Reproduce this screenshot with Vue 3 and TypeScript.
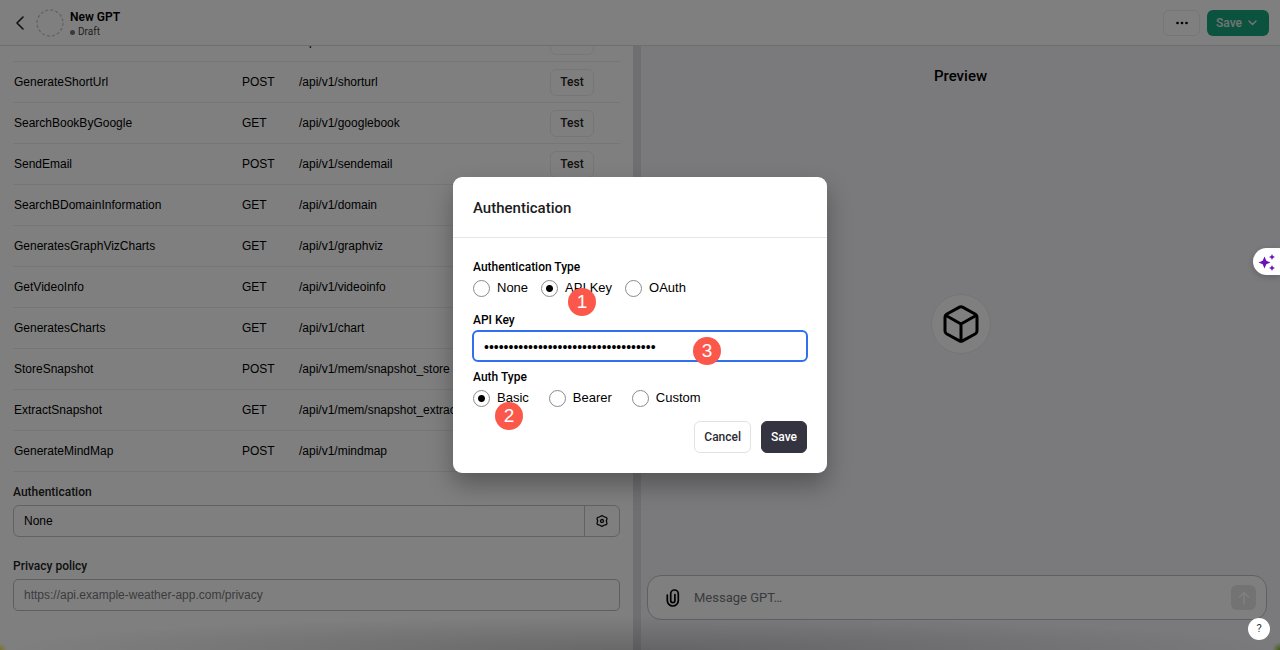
<script setup lang="ts">
import { ref } from 'vue'

interface Action {
  name: string
  method: string
  path: string
}

const actions: Action[] = [
  { name: '', method: '', path: '/api/v1/' },
  { name: 'GenerateShortUrl', method: 'POST', path: '/api/v1/shorturl' },
  { name: 'SearchBookByGoogle', method: 'GET', path: '/api/v1/googlebook' },
  { name: 'SendEmail', method: 'POST', path: '/api/v1/sendemail' },
  { name: 'SearchBDomainInformation', method: 'GET', path: '/api/v1/domain' },
  { name: 'GeneratesGraphVizCharts', method: 'GET', path: '/api/v1/graphviz' },
  { name: 'GetVideoInfo', method: 'GET', path: '/api/v1/videoinfo' },
  { name: 'GeneratesCharts', method: 'GET', path: '/api/v1/chart' },
  { name: 'StoreSnapshot', method: 'POST', path: '/api/v1/mem/snapshot_store' },
  { name: 'ExtractSnapshot', method: 'GET', path: '/api/v1/mem/snapshot_extract' },
  { name: 'GenerateMindMap', method: 'POST', path: '/api/v1/mindmap' },
]

const authKind = ref('API Key')
const authScheme = ref('Basic')
const apiKey = ref('0123456789abcdef0123456789abcdef012')
const message = ref('')
const privacy = ref('')
</script>

<template>
  <div class="page">
    <header class="topbar">
      <button class="plain" aria-label="Back">
        <svg width="10" height="16" viewBox="0 0 10 16"><path d="M8 2 2 8l6 6" fill="none" stroke="#222" stroke-width="1.6" stroke-linecap="round" stroke-linejoin="round" /></svg>
      </button>
      <svg class="avatar" width="28" height="28" viewBox="0 0 28 28"><circle cx="14" cy="14" r="13" fill="none" stroke="#c8c8c8" stroke-width="1.4" stroke-dasharray="3 2.1" /></svg>
      <div class="names">
        <div class="title">New GPT</div>
        <div class="draft"><span class="dot"></span>Draft</div>
      </div>
      <button class="more" aria-label="More">
        <svg width="14" height="4" viewBox="0 0 14 4"><circle cx="2.5" cy="2" r="1.3" /><circle cx="7" cy="2" r="1.3" /><circle cx="11.5" cy="2" r="1.3" /></svg>
      </button>
      <button class="publish">
        Save
        <svg width="9" height="6" viewBox="0 0 9 6"><path d="M1 1l3.5 3.5L8 1" fill="none" stroke="#e8e8e8" stroke-width="1.5" stroke-linecap="round" stroke-linejoin="round" /></svg>
      </button>
    </header>

    <main class="columns">
      <section class="editor">
        <table>
          <tbody>
            <tr v-for="a in actions" :key="a.path">
              <td class="c-name">{{ a.name }}</td>
              <td class="c-method">{{ a.method }}</td>
              <td>{{ a.path }}</td>
              <td class="c-test"><button class="test">Test</button></td>
            </tr>
          </tbody>
        </table>
        <label class="label" for="auth">Authentication</label>
        <div class="authbox">
          <input id="auth" value="None" readonly />
          <button class="gear" aria-label="Authentication settings">
            <svg width="12" height="12" viewBox="0 0 24 24" fill="none" stroke="#111" stroke-width="2.6" stroke-linejoin="round"><path d="M9.2 3Q12-.4 14.8 3L18.600 4.400Q23 5.200 21.600 9L20.600 12l1 3Q23 18.800 18.600 19.600L14.800 21Q12 24.400 9.200 21L5.400 19.600Q1 18.800 2.400 15L3.400 12 2.400 9Q1 5.200 5.400 4.400Z" /><circle cx="12" cy="12" r="3" /></svg>
          </button>
        </div>
        <label class="label privacy-label" for="privacy">Privacy policy</label>
        <input id="privacy" v-model="privacy" class="privacy" placeholder="https://api.example-weather-app.com/privacy" />
      </section>

      <div class="gutter"></div>

      <section class="preview">
        <h2>Preview</h2>
        <div class="stage">
          <div class="cube">
            <svg width="36" height="38" viewBox="0 0 36 38" fill="none" stroke="#000" stroke-width="3" stroke-linejoin="round" stroke-linecap="round"><path d="M16.500 2.100Q18 1.300 19.500 2.100L32.500 9.300Q34 10.200 34 12V26Q34 27.800 32.500 28.700L19.500 35.900Q18 36.700 16.500 35.900L3.500 28.700Q2 27.800 2 26V12Q2 10.200 3.500 9.300ZM3 10.500 18 19l15-8.500M18 19v17" /></svg>
          </div>
        </div>
        <div class="composer">
          <svg width="14" height="18" viewBox="0 0 14 18" fill="none" stroke="#000" stroke-width="1.7" stroke-linecap="round"><path d="M1.300 6v5.500a5.500 5.500 0 0 0 11 0V4.800a3.800 3.800 0 0 0-7.600 0v6.700a2.100 2.100 0 0 0 4.200 0V5.500" /></svg>
          <input v-model="message" placeholder="Message GPT…" aria-label="Message GPT" />
          <button class="send" aria-label="Send">
            <svg width="12" height="14" viewBox="0 0 12 14" fill="none" stroke="#fff" stroke-width="1.600" stroke-linecap="round" stroke-linejoin="round"><path d="M6 13V2M1.500 6 6 1.500 10.500 6" /></svg>
          </button>
        </div>
      </section>
    </main>

    <div class="backdrop">
      <div class="dialog" role="dialog" aria-labelledby="dlg-title">
        <h1 id="dlg-title">Authentication</h1>
        <form class="form" @submit.prevent>
          <div class="field-label">Authentication Type</div>
          <div class="radios">
            <label><input v-model="authKind" type="radio" name="kind" value="None" />None</label>
            <label><input v-model="authKind" type="radio" name="kind" value="API Key" />API Key<span class="badge b1">1</span></label>
            <label><input v-model="authKind" type="radio" name="kind" value="OAuth" />OAuth</label>
          </div>
          <label class="field-label key-label" for="key">API Key</label>
          <div class="keybox">
            <input id="key" v-model="apiKey" type="password" />
            <span class="badge b3">3</span>
          </div>
          <div class="field-label scheme-label">Auth Type</div>
          <div class="radios wide">
            <label><input v-model="authScheme" type="radio" name="scheme" value="Basic" />Basic<span class="badge b2">2</span></label>
            <label><input v-model="authScheme" type="radio" name="scheme" value="Bearer" />Bearer</label>
            <label><input v-model="authScheme" type="radio" name="scheme" value="Custom" />Custom</label>
          </div>
          <div class="buttons">
            <button type="button" class="cancel">Cancel</button>
            <button type="submit" class="save">Save</button>
          </div>
        </form>
      </div>
    </div>

    <button class="assistant" aria-label="Assistant">
      <svg width="18" height="18" viewBox="0 0 18 18" fill="#6b12b8"><path d="M6.500 3.500 8.300 7.700 12.500 9.500 8.300 11.300 6.500 15.500 4.700 11.300.5 9.500 4.700 7.700ZM14 1l.9 2.100L17 4l-2.100.9L14 7l-.9-2.100L11 4l2.100-.9ZM14 12l.9 2.100 2.100.9-2.100.9L14 18l-.9-2.100L11 15l2.100-.9Z" /></svg>
    </button>
    <button class="help">?</button>
  </div>
</template>

<style>
body {
  margin: 0;
}
</style>

<style scoped>
.page {
  position: relative;
  display: flex;
  flex-direction: column;
  height: 100vh;
  overflow: hidden;
  background: #fff;
  color: #000;
  font-family: Roboto, "Liberation Sans", sans-serif;
  font-size: 12px;
  line-height: 16px;
}
.page *,
.page *::before {
  box-sizing: border-box;
}
button,
input {
  margin: 0;
  font: inherit;
  color: inherit;
}
svg {
  display: block;
  flex: none;
}
td,
.authbox input,
.privacy,
.radios {
  font-family: "Liberation Sans", Arial, sans-serif;
}
.topbar {
  display: flex;
  align-items: center;
  height: 46px;
  flex: none;
  padding: 0 11px 0 15px;
  border-bottom: 1px solid #dcdcdc;
}
.plain {
  padding: 0;
  border: 0;
  background: none;
}
.avatar {
  margin: 0 6px 0 11px;
}
.names {
  flex: 1;
  padding-top: 4px;
}
.title {
  font-weight: 600;
  line-height: 15px;
}
.draft {
  display: flex;
  align-items: center;
  gap: 3px;
  font-size: 10px;
  line-height: 14px;
  color: #444;
}
.dot {
  width: 5px;
  height: 5px;
  border-radius: 50%;
  background: #777;
}
.more {
  display: flex;
  align-items: center;
  justify-content: center;
  width: 37px;
  height: 26px;
  margin-right: 7px;
  border: 1px solid #ececec;
  border-radius: 6px;
  background: #fff;
}
.publish {
  display: flex;
  align-items: center;
  gap: 6px;
  height: 26px;
  padding: 0 12px 0 9px;
  border: 0;
  border-radius: 6px;
  background: #17a67e;
  color: #e8e8e8;
  font-weight: 500;
}
.columns {
  display: grid;
  grid-template-columns: minmax(0, 633fr) 8px minmax(0, 639fr);
  grid-template-rows: minmax(0, 1fr);
  flex: 1;
  min-height: 0;
}
.editor {
  display: flex;
  flex-direction: column;
  justify-content: flex-end;
  overflow: hidden;
  padding: 0 13px 39px;
}
table {
  flex: none;
  width: 100%;
  border-collapse: separate;
  border-spacing: 0;
  table-layout: fixed;
}
td {
  height: 41px;
  padding: 0 0 0 1px;
  border-bottom: 1px solid #ececec;
  white-space: nowrap;
}
.c-name {
  width: 228px;
}
.c-method {
  width: 57px;
}
.c-test {
  width: 71px;
}
.test {
  display: block;
  width: 44px;
  height: 27px;
  padding: 0;
  border: 1px solid #ececec;
  border-radius: 6px;
  background: #fff;
  font-family: Roboto, sans-serif;
  font-weight: 500;
  color: #222;
}
.label {
  flex: none;
  margin: 12px 0 5px;
  font-weight: 500;
  color: #222;
}
.authbox {
  display: flex;
  flex: none;
  height: 32px;
  border: 1px solid #c4c4c8;
  border-radius: 6px;
}
.authbox input {
  flex: 1;
  min-width: 0;
  padding: 0 10px;
  border: 0;
  background: none;
  outline: none;
}
.gear {
  display: flex;
  align-items: center;
  justify-content: center;
  width: 35px;
  border: 0;
  border-left: 1px solid #c4c4c8;
  background: none;
}
.privacy-label {
  margin-top: 21px;
}
.privacy {
  flex: none;
  height: 32px;
  padding: 0 10px;
  border: 1px solid #bcbcc0;
  border-radius: 5px;
  background: none;
}
.privacy::placeholder {
  color: #77777c;
  opacity: 1;
}
.gutter {
  background: #dfdfe6;
}
.preview {
  display: flex;
  flex-direction: column;
  padding: 20px 0 30px;
  background: #f5f5f8;
}
h2 {
  margin: 0;
  font-size: 15px;
  line-height: 20px;
  font-weight: 500;
  text-align: center;
}
.stage {
  flex: 1;
  display: flex;
  align-items: center;
  justify-content: center;
  padding-bottom: 14px;
}
.cube {
  display: flex;
  align-items: center;
  justify-content: center;
  width: 60px;
  height: 60px;
  border: 1px solid #e9e9e9;
  border-radius: 50%;
  background: #fff;
}
.composer {
  display: flex;
  align-items: center;
  height: 45px;
  margin: 0 13px 0 6px;
  padding: 0 10px 0 18px;
  border: 1px solid #c0c0c4;
  border-radius: 14px;
  background: #fff;
}
.composer input {
  flex: 1;
  min-width: 0;
  padding: 0 14px;
  border: 0;
  background: none;
  font-size: 13px;
}
.composer input::placeholder {
  color: #76767a;
  opacity: 1;
}
.send {
  display: flex;
  align-items: center;
  justify-content: center;
  width: 25px;
  height: 25px;
  padding: 0;
  border: 0;
  border-radius: 6px;
  background: #e6e6e6;
}
.backdrop {
  position: absolute;
  inset: 0;
  display: flex;
  align-items: center;
  justify-content: center;
  background:
    radial-gradient(circle at 0 100%, #7d7420 0, transparent 7px),
    radial-gradient(circle at 100% 100%, #415c10 0, transparent 8px),
    radial-gradient(ellipse 50% 34px at 50% 100%, rgba(0, 0, 0, 0.18), transparent),
    rgba(0, 0, 0, 0.5);
}
.dialog {
  width: 374px;
  border-radius: 9px;
  background: #fff;
  box-shadow: 0 12px 24px rgba(0, 0, 0, 0.3);
}
h1 {
  margin: 0;
  padding: 21px 20px 19px;
  border-bottom: 1px solid #e6e6e6;
  font-size: 15px;
  line-height: 20px;
  font-weight: 500;
  color: #1c1c1c;
}
.form {
  padding: 21px 20px 20px;
}
.field-label {
  display: block;
  font-weight: 500;
}
.radios {
  display: flex;
  gap: 13px;
  margin-top: 4px;
  font-size: 13px;
  line-height: 18px;
}
.radios.wide {
  gap: 20px;
}
.radios label {
  position: relative;
  display: flex;
  align-items: center;
  gap: 7px;
}
.radios input {
  appearance: none;
  width: 17px;
  height: 17px;
  border: 1px solid #8a8a90;
  border-radius: 50%;
  background: #fff;
}
.radios input:checked {
  background: radial-gradient(circle, #000 3px, transparent 4px);
}
.key-label {
  margin-top: 15px;
}
.keybox {
  position: relative;
  margin: 2px -1px 0;
}
.keybox input {
  display: block;
  width: 100%;
  height: 32px;
  padding: 2px 10px 0;
  border: 2px solid #2f6ff0;
  border-radius: 6px;
  outline: none;
  background: #fff;
  font-family: "Liberation Sans", Arial, sans-serif;
  font-size: 14px;
}
.scheme-label {
  margin-top: 7px;
}
.badge {
  position: absolute;
  width: 28px;
  height: 28px;
  border-radius: 50%;
  background: #fb584b;
  color: #fff;
  font-family: "Liberation Sans", Arial, sans-serif;
  font-size: 19px;
  line-height: 28px;
  text-align: center;
}
.b1 {
  left: 27px;
  top: 9px;
}
.b2 {
  left: 22px;
  top: 13px;
}
.b3 {
  right: 87px;
  top: 7px;
}
.buttons {
  display: flex;
  justify-content: flex-end;
  gap: 10px;
  margin-top: 14px;
}
.buttons button {
  height: 32px;
  padding: 0 9px;
  border: 1px solid #e2e2e2;
  border-radius: 6px;
  background: #fff;
  font-weight: 500;
  color: #2c2c34;
}
.buttons .save {
  border-color: #343340;
  background: #343340;
  color: #fff;
}
.assistant {
  position: absolute;
  right: 0;
  top: 248px;
  width: 27px;
  height: 27px;
  padding: 0 0 0 5px;
  border: 0;
  border-radius: 14px 0 0 14px;
  background: #fff;
  box-shadow: 0 2px 6px rgba(0, 0, 0, 0.2);
}
.help {
  position: absolute;
  right: 10px;
  bottom: 10px;
  width: 22px;
  height: 22px;
  padding: 0;
  border: 0;
  border-radius: 50%;
  background: #fff;
  font-size: 11px;
  color: #333;
}
</style>
